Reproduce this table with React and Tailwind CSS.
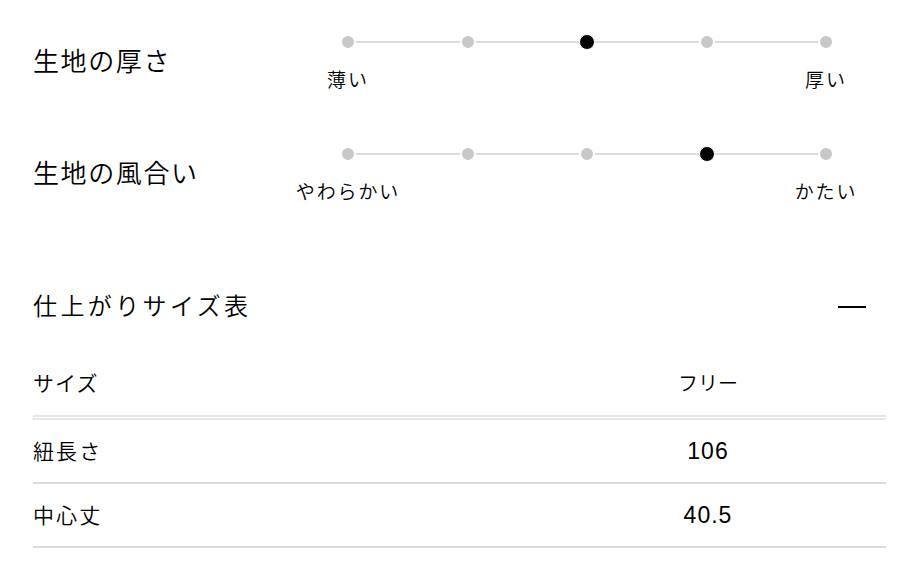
const jp = "font-['Noto_Sans_CJK_JP',sans-serif]";

const sliders = [
    { title: "生地の厚さ", left: "薄い", right: "厚い", value: 2 },
    { title: "生地の風合い", left: "やわらかい", right: "かたい", value: 3 },
];

const rows = [
    { label: "紐長さ", value: "106" },
    { label: "中心丈", value: "40.5" },
];

function Scale({ left, right, value }) {
    return (
        <div className="w-[494px]">
            <div className="relative flex h-4 items-center justify-between">
                <div className="absolute left-2 right-2 top-[7px] h-[2px] bg-[#dcdcdc]" />
                {[0, 1, 2, 3, 4].map((i) => (
                    <div key={i} className="relative flex h-4 w-4 items-center justify-center">
                        {i === value ? (
                            <div className="h-4 w-4 rounded-full border border-white bg-black" />
                        ) : (
                            <div className="h-4 w-4 rounded-full border-[2px] border-white bg-[#c8c8c8]" />
                        )}
                    </div>
                ))}
            </div>
            <div className={`mt-[17px] flex justify-between text-[19px] font-[350] leading-6 tracking-[0.1em] text-black ${jp}`}>
                <div className="flex w-4 justify-center whitespace-nowrap">{left}</div>
                <div className="flex w-4 justify-center whitespace-nowrap">{right}</div>
            </div>
        </div>
    );
}

export default function App() {
    return (
        <div className="min-h-[568px] w-[904px] bg-white pl-[33px] pr-[18px] pt-[34px] text-black">

            {sliders.map((s, i) => (
                <div key={s.title} className={`flex items-start ${i > 0 ? "mt-[55px]" : ""}`}>
                    <div className={`mt-2 w-[307px] text-[26px] font-[350] leading-9 tracking-[1.6px] ${jp}`}>
                        {s.title}
                    </div>
                    <Scale left={s.left} right={s.right} value={s.value} />
                </div>
            ))}

            <div className="mt-[85px] flex items-center justify-between">
                <h2 className={`text-[24px] font-[350] leading-[34px] tracking-[3.4px] ${jp}`}>
                    仕上がりサイズ表
                </h2>
                <div className="mr-[20px] mt-[3px] h-[2px] w-[28px] bg-black" />
            </div>

            <div className="mt-[29px]">
                <div className="flex h-16 items-center">
                    <div className={`w-[497px] text-[21px] font-[350] tracking-[0.05em] ${jp}`}>サイズ</div>
                    <div className={`flex-1 text-center text-[20px] font-[350] ${jp}`}>フリー</div>
                </div>
                <div className="h-[2px] bg-[#e6e6e6]" />
                <div className="mt-[1px] h-[2px] bg-[#e6e6e6]" />

                {rows.map((r) => (
                    <div key={r.label} className="flex h-16 items-center border-b-2 border-[#dcdcdc]">
                        <div className={`w-[497px] text-[21px] font-[350] tracking-[0.1em] ${jp}`}>{r.label}</div>
                        <div className="flex-1 text-center font-['Liberation_Sans',sans-serif] text-[23px] tracking-[1px]">
                            {r.value}
                        </div>
                    </div>
                ))}
            </div>

        </div>
    );
}
